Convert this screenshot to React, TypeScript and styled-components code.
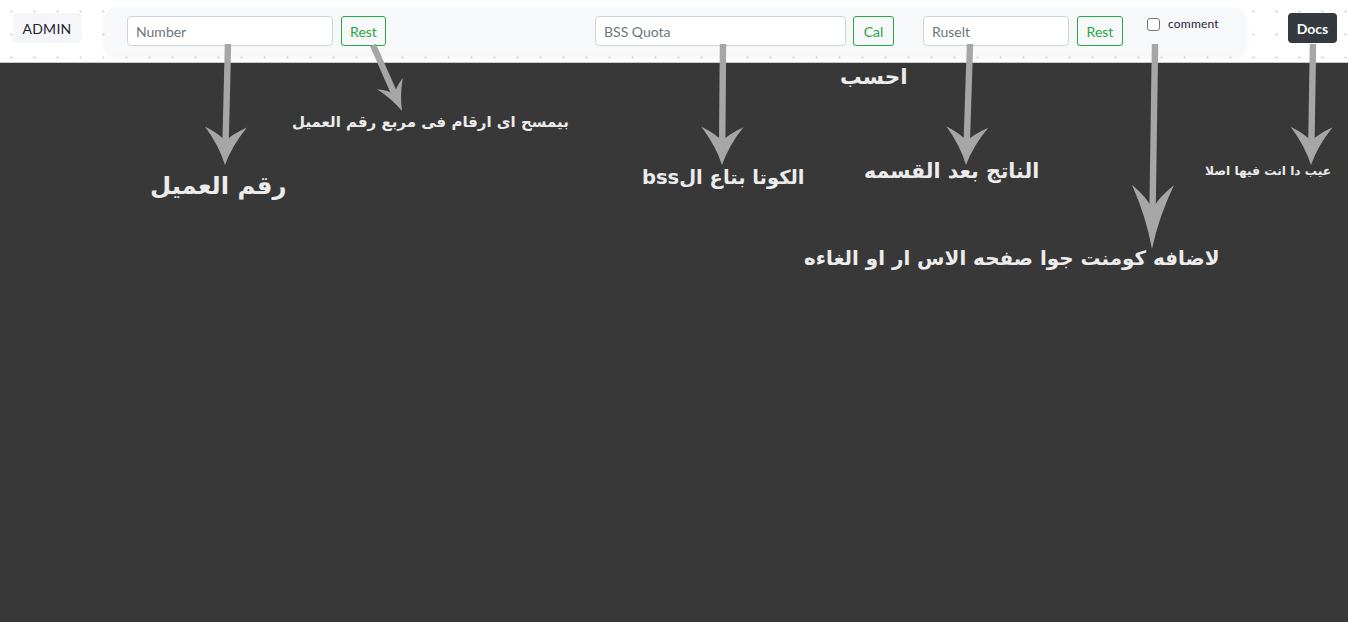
import React from "react";
import styled, { createGlobalStyle } from "styled-components";

const Global = createGlobalStyle`
  html, body { margin: 0; padding: 0; }
  body { background: #383838; font-family: "Lato", "Noto Sans", sans-serif; }
  * { box-sizing: border-box; }
`;

const Page = styled.div`
  position: relative;
  width: 1348px;
  height: 622px;
  background: #383838;
  overflow: hidden;
`;

const Header = styled.header`
  display: flex;
  align-items: flex-start;
  height: 63px;
  padding: 8px 11px 0 13px;
  background-color: #ffffff;
  background-image: radial-gradient(circle, #d4d4d4 0.9px, transparent 1.2px);
  background-size: 23px 23px;
  background-position: 0px 0px;
  border-bottom: 1px solid #c9c9c9;
`;

const Admin = styled.div`
  margin-top: 5px;
  width: 68px;
  height: 30px;
  display: flex;
  align-items: center;
  justify-content: center;
  background: #f5f6f8;
  border-radius: 4px;
  color: #1f2233;
  font-size: 14px;
  letter-spacing: 0.3px;
`;

const Panel = styled.div`
  margin-left: 24px;
  width: 1140px;
  height: 46px;
  display: flex;
  align-items: center;
  padding: 0 22px;
  background: #f7f8fa;
  border-radius: 10px;
  box-shadow: 0 2px 6px rgba(0, 0, 0, 0.06);
`;

const Input = styled.input<{ $w: number; $ml?: number }>`
  width: ${(p) => p.$w}px;
  margin-left: ${(p) => p.$ml ?? 0}px;
  height: 30px;
  padding: 0 8px;
  border: 1px solid #ced4da;
  border-radius: 4px;
  background: #fff;
  font-family: "Lato", "Noto Sans", sans-serif;
  font-size: 14px;
  color: #495057;
  outline: none;
  &::placeholder { color: #6c757d; }
`;

const GreenBtn = styled.button<{ $w: number; $ml?: number }>`
  width: ${(p) => p.$w}px;
  margin-left: ${(p) => p.$ml ?? 8}px;
  height: 30px;
  padding: 0;
  border: 1px solid #28a745;
  border-radius: 3px;
  background: transparent;
  color: #28a745;
  font-family: "Lato", "Noto Sans", sans-serif;
  font-size: 14px;
`;

const CheckGroup = styled.label`
  align-self: flex-start;
  margin-top: 8px;
  margin-left: 24px;
  display: flex;
  align-items: flex-end;
  gap: 8px;
  font-size: 12px;
  color: #1f2233;
  letter-spacing: 0.2px;
`;

const Box = styled.span`
  width: 13px;
  height: 13px;
  border: 1px solid #767676;
  border-radius: 3px;
  background: #fff;
`;

const Docs = styled.button`
  margin-left: auto;
  margin-top: 5px;
  width: 49px;
  height: 30px;
  padding: 0;
  border: none;
  border-radius: 4px;
  background: #343a40;
  color: #fff;
  font-family: "Lato", "Noto Sans", sans-serif;
  font-weight: 700;
  font-size: 14px;
`;

const Overlay = styled.svg`
  position: absolute;
  left: 0;
  top: 0;
  pointer-events: none;
`;

const Note = styled.div<{ $x: number; $y: number; $size: number }>`
  position: absolute;
  left: ${(p) => p.$x}px;
  top: ${(p) => p.$y}px;
  direction: rtl;
  white-space: nowrap;
  font-family: "DejaVu Sans", sans-serif;
  font-weight: 700;
  font-size: ${(p) => p.$size}px;
  line-height: 1;
  color: #ececec;
`;

type ArrowProps = { x1: number; y1: number; x2: number; y2: number; head?: number; half?: number };

const Arrow = ({ x1, y1, x2, y2, head = 40, half = 20 }: ArrowProps) => {
  const ang = (Math.atan2(y2 - y1, x2 - x1) * 180) / Math.PI - 90;
  const len = Math.hypot(x2 - x1, y2 - y1);
  const h = head;
  const w = half;
  return (
    <g transform={`translate(${x1} ${y1}) rotate(${ang})`} fill="#a6a6a6">
      <rect x={-3.2} y={0} width={6.4} height={len - h * 0.6} />
      <path
        d={`M0 ${len} Q ${-w * 0.3} ${len - h * 0.5} ${-w} ${len - h} Q ${-w * 0.25} ${len - h * 0.8} 0 ${len - h * 0.62} Q ${w * 0.25} ${len - h * 0.8} ${w} ${len - h} Q ${w * 0.3} ${len - h * 0.5} 0 ${len} Z`}
      />
    </g>
  );
};

export default function App() {
  return (
    <Page>
      <Global />
      <Header>
        <Admin>ADMIN</Admin>
        <Panel>
          <Input $w={206} placeholder="Number" />
          <GreenBtn $w={45}>Rest</GreenBtn>
          <Input $w={251} $ml={209} placeholder="BSS Quota" />
          <GreenBtn $w={41} $ml={7}>Cal</GreenBtn>
          <Input $w={146} $ml={29} placeholder="Ruselt" />
          <GreenBtn $w={46}>Rest</GreenBtn>
          <CheckGroup>
            <Box />
            <span>comment</span>
          </CheckGroup>
        </Panel>
        <Docs>Docs</Docs>
      </Header>

      <Overlay width={1348} height={622}>
        <Arrow x1={228} y1={44} x2={225} y2={165} head={38} half={21} />
        <Arrow x1={373} y1={45} x2={402} y2={111} head={30} half={14} />
        <Arrow x1={723} y1={44} x2={722} y2={165} head={38} half={21} />
        <Arrow x1={970} y1={44} x2={966} y2={165} head={38} half={21} />
        <Arrow x1={1155} y1={44} x2={1152} y2={249} head={64} half={21} />
        <Arrow x1={1313} y1={44} x2={1311} y2={165} head={38} half={21} />
      </Overlay>

      <Note $x={150} $y={174} $size={24.3}>رقم العميل</Note>
      <Note $x={292} $y={115} $size={15}>بيمسح اى ارقام فى مربع رقم العميل</Note>
      <Note $x={840} $y={66} $size={21.5}>احسب</Note>
      <Note $x={642} $y={168} $size={19.5}>الكوتا بتاع الbss</Note>
      <Note $x={864} $y={161} $size={20.5}>الناتج بعد القسمه</Note>
      <Note $x={1205} $y={165} $size={12.2}>عيب دا انت فيها اصلا</Note>
      <Note $x={804} $y={249} $size={19.9}>لاضافه كومنت جوا صفحه الاس ار او الغاءه</Note>
    </Page>
  );
}
